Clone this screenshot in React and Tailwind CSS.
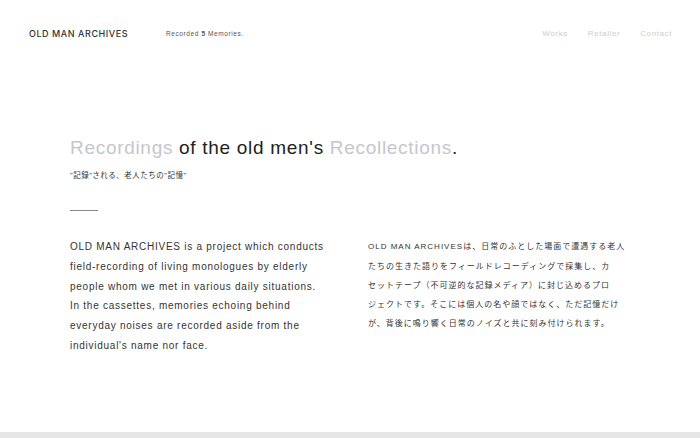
import React from 'react';

const navLinks = ['Works', 'Retailer', 'Contact'];

const enLines = [
  'OLD MAN ARCHIVES is a project which conducts',
  'field-recording of living monologues by elderly',
  'people whom we met in various daily situations.',
  'In the cassettes, memories echoing behind',
  'everyday noises are recorded aside from the',
  "individual's name nor face.",
];

const jaLines = [
  'OLD MAN ARCHIVESは、日常のふとした場面で遭遇する老人',
  'たちの生きた語りをフィールドレコーディングで採集し、カ',
  'セットテープ（不可逆的な記録メディア）に封じ込めるプロ',
  'ジェクトです。そこには個人の名や顔ではなく、ただ記憶だけ',
  'が、背後に鳴り響く日常のノイズと共に刻み付けられます。',
];

function Header() {
  return (
    <header className="flex items-center h-[68px] pl-[29px] pr-[28px]">
      <h1 className="text-[9px] font-medium tracking-[0.55px] text-[#333] w-[137px] font-['Inter',sans-serif]">
        OLD MAN ARCHIVES
      </h1>
      <p className="text-[6.5px] tracking-[0.6px] text-[#555]">
        Recorded <span className="font-bold">5</span> Memories.
      </p>
      <nav className="ml-auto flex gap-[20px] text-[8px] font-normal tracking-[0.6px] text-[#cdcdcd]">
        {navLinks.map((l) => (
          <a key={l} href="#">{l}</a>
        ))}
      </nav>
    </header>
  );
}

function App() {
  return (
    <div
      className="w-[700px] h-[438px] bg-white flex flex-col overflow-hidden"
      style={{ fontFamily: '"Liberation Sans", "Noto Sans CJK JP", sans-serif' }}
    >
      <Header />
      <main className="flex-1 pl-[70px] pt-[66px]">
        <h2 className="text-[19px] tracking-[0.7px] leading-[28px] text-[#222]">
          <span className="text-[#c4c7cc]">Recordings</span> of the old men's{' '}
          <span className="text-[#c4c7cc]">Recollections</span>.
        </h2>
        <p className="mt-[8px] text-[7.5px] tracking-[0.5px] text-[#333]">"記録"される、老人たちの"記憶"</p>
        <div className="mt-[29px] w-[28px] h-px bg-[#888]" />
        <div className="mt-[26px] flex gap-[45px]">
          <p className="w-[253px] text-[10px] leading-[19.7px] tracking-[0.74px] text-[#333] whitespace-nowrap">
            {enLines.map((l, i) => (
              <span key={i} className="block">{l}</span>
            ))}
          </p>
          <p className="text-[8px] leading-[19.3px] tracking-[1px] text-[#333] whitespace-nowrap">
            {jaLines.map((l, i) => (
              <span key={i} className="block">{l}</span>
            ))}
          </p>
        </div>
      </main>
      <div className="h-[6px] bg-[#e6e6e6]" />
    </div>
  );
}

export default App;
